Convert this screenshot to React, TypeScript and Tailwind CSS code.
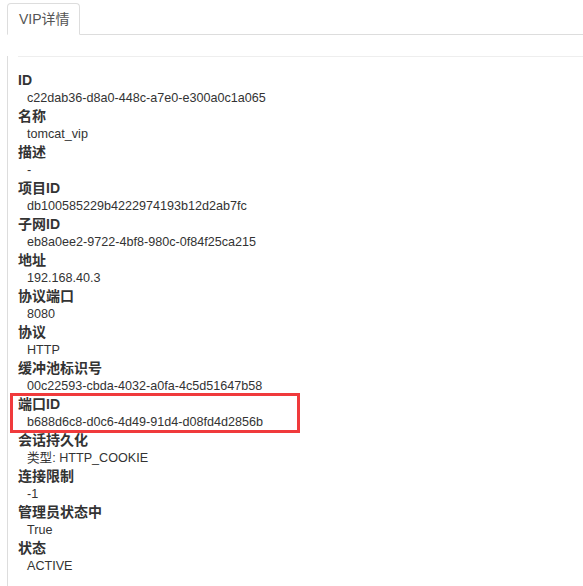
const fields: { label: string; value: string; marked?: boolean }[] = [
  { label: 'ID', value: 'c22dab36-d8a0-448c-a7e0-e300a0c1a065' },
  { label: '名称', value: 'tomcat_vip' },
  { label: '描述', value: '-' },
  { label: '项目ID', value: 'db100585229b4222974193b12d2ab7fc' },
  { label: '子网ID', value: 'eb8a0ee2-9722-4bf8-980c-0f84f25ca215' },
  { label: '地址', value: '192.168.40.3' },
  { label: '协议端口', value: '8080' },
  { label: '协议', value: 'HTTP' },
  { label: '缓冲池标识号', value: '00c22593-cbda-4032-a0fa-4c5d51647b58' },
  { label: '端口ID', value: 'b688d6c8-d0c6-4d49-91d4-d08fd4d2856b', marked: true },
  { label: '会话持久化', value: '类型: HTTP_COOKIE' },
  { label: '连接限制', value: '-1' },
  { label: '管理员状态中', value: 'True' },
  { label: '状态', value: 'ACTIVE' },
];

export default function App() {
  return (
    <div className="bg-white min-h-screen pt-[3px] pl-[7px] text-[#333] font-['Liberation_Sans','Noto_Sans_CJK_SC',sans-serif]">
      {/* Tabs */}
      <div className="flex border-b border-[#ddd]">
        <div className="-mb-px h-[32px] w-[73px] flex items-center pl-[11px] pt-[1px] bg-white border border-[#ddd] border-b-white rounded-t-[4px] text-[14px] text-[#555]">
          VIP详情
        </div>
      </div>

      {/* Content */}
      <div className="border-l border-[#ddd] pl-[10px] pb-[24px]">
        <hr className="mt-[21px] mb-[14px] border-t border-[#eee]" />
        <dl>
          {fields.map((f) => (
            <div key={f.label} className="relative">
              <dt className="text-[14px] font-bold leading-[18px]">{f.label}</dt>
              <dd className="pl-[9px] text-[12.6px] leading-[18px]">{f.value}</dd>
              {f.marked && (
                <div className="absolute -top-[2px] -bottom-[2px] -left-[8px] w-[290px] border-[3px] border-[#f03a3c]" />
              )}
            </div>
          ))}
        </dl>
      </div>
    </div>
  );
}
